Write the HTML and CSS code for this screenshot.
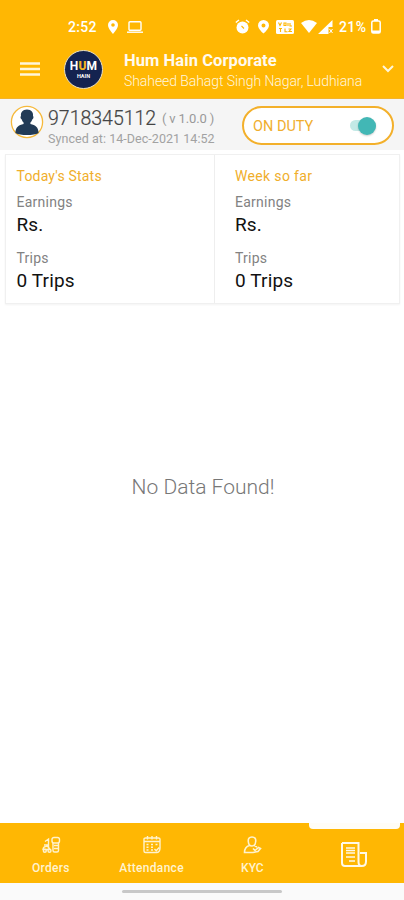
FILE: index.html
```
<!DOCTYPE html>
<html lang="en">
<head>
<meta charset="utf-8">
<title>Hum Hain Corporate</title>
<link rel="stylesheet" href="styles.css">
</head>
<body>
<header class="top">
  <div class="status">
    <span class="time">2:52</span>
    <svg class="s-pin" width="10" height="14" viewBox="0 0 10 14"><path fill="#fff" fill-rule="evenodd" d="M5 0a5 5 0 0 0-5 5c0 3.500 5 9 5 9s5-5.500 5-9a5 5 0 0 0-5-5zm0 3.200a1.800 1.800 0 1 1 0 3.600 1.800 1.800 0 0 1 0-3.600z"/></svg>
    <svg class="s-laptop" width="16" height="12" viewBox="0 0 16 12" fill="none" stroke="#fff" stroke-width="1.400"><rect x="2" y=".8" width="12" height="8.500" rx="1"/><path d="M0 11.200h16"/></svg>
    <span class="grow"></span>
    <svg class="s-alarm" width="15" height="15" viewBox="0 0 15 15"><circle cx="7.500" cy="8.500" r="6" fill="#fff"/><path d="M.8 3.500 4 1M14.200 3.500 11 1" stroke="#fff" stroke-width="1.500"/><path d="m6.500 7 2.500 2.500" fill="none" stroke="#ffb703" stroke-width="1.100"/></svg>
    <svg class="s-pin2" width="11" height="14" viewBox="0 0 11 14"><path fill="#fff" fill-rule="evenodd" d="M5.500 0A5.500 5.500 0 0 0 0 5.500C0 9 5.500 13.500 5.500 13.500S11 9 11 5.500A5.500 5.500 0 0 0 5.500 0zm0 3.500a2 2 0 1 1 0 4 2 2 0 0 1 0-4z"/></svg>
    <svg class="s-volte" width="18" height="14" viewBox="0 0 18 14"><rect width="18" height="14" rx="1.500" fill="#fff"/><path d="M2.500 2.500 4 5.500 5.500 2.500M8 3h2v2.500H8zM12 3v3M14 3v3h2M3 8.500h3M4.500 8.500V12M9 8.500v3.300h2.500M12.500 9H15l-2 2.500h3" fill="none" stroke="#ffb703" stroke-width="1.100"/></svg>
    <svg class="s-wifi" width="16" height="13" viewBox="0 0 16 13"><path fill="#fff" d="M0 3Q8-3 16 3L8 13z"/></svg>
    <svg class="s-signal" width="15" height="14" viewBox="0 0 15 14"><path fill="#fff" d="M0 14 14.500 0v7h-4v7z"/><path d="m11.500 9 3 4m0-4-3 4" stroke="#fff" stroke-width="1"/></svg>
    <span class="pct">21%</span>
    <svg class="s-batt" width="10" height="15" viewBox="0 0 10 15"><path fill="#fff" d="M3 0h4v2H3z"/><rect x=".8" y="2" width="8.400" height="12" rx="1.500" fill="none" stroke="#fff" stroke-width="1.500"/><path fill="#fff" d="M1 11.500h8V14H1z"/></svg>
  </div>
  <div class="appbar">
    <svg class="menu" width="20" height="14" viewBox="0 0 20 14"><path d="M0 1.400h20M0 7h20M0 12.600h20" stroke="#fff6dc" stroke-width="2.500"/></svg>
    <div class="logo"><span class="logo-main">H<b>U</b>M</span><span class="logo-sub">HAIN</span></div>
    <div class="titles">
      <div class="title">Hum Hain Corporate</div>
      <div class="subtitle">Shaheed Bahagt Singh Nagar, Ludhiana</div>
    </div>
    <svg class="chev" width="12" height="8" viewBox="0 0 12 8"><path d="m1 1 5 5 5-5" fill="none" stroke="#fff6dc" stroke-width="2"/></svg>
  </div>
</header>
<section class="user">
  <svg class="avatar" width="34" height="34" viewBox="0 0 34 34"><circle cx="17" cy="17" r="15.600" fill="#fff" stroke="#f6b93b" stroke-width="1.300"/><path fill="#223b57" d="M17 4.500c-4.500 0-6.500 3-6 6.500-1 .5-.4 3 .6 3.300.5 1.700 1.200 2.500 2 3.200v1.500c-5 1-8 3-8.200 9Q9.500 30 17 30t11.600-2c-.2-6-3.200-8-8.200-9v-1.500c.8-.7 1.500-1.500 2-3.200 1-.3 1.600-2.800.6-3.300.5-3.500-1.500-6.500-6-6.500z"/></svg>
  <div class="who">
    <div class="phone-row"><span class="phone">9718345112</span><span class="ver">( v 1.0.0 )</span></div>
    <div class="sync">Synced at: 14-Dec-2021 14:52</div>
  </div>
  <div class="duty"><span class="duty-text">ON DUTY</span><span class="track"><span class="knob"></span></span></div>
</section>
<section class="stats">
  <div class="card">
    <div class="head">Today's Stats</div>
    <div class="label">Earnings</div><div class="value">Rs.</div>
    <div class="label second">Trips</div><div class="value">0 Trips</div>
  </div>
  <div class="card week">
    <div class="head">Week so far</div>
    <div class="label">Earnings</div><div class="value">Rs.</div>
    <div class="label second">Trips</div><div class="value">0 Trips</div>
  </div>
</section>
<main class="empty"><span class="empty-text">No Data Found!</span></main>
<nav class="nav">
  <div class="tab">
    <svg width="20" height="18" viewBox="0 0 20 18" fill="none" stroke="#fff3cf" stroke-width="1.400"><path d="M4 5.500 7.500 3v9.500M3 9h4M2 14c0-3 2-4 5-3.500l2 3H2z"/><circle cx="3.800" cy="14.700" r="1.500"/><circle cx="8.500" cy="14.700" r="1.500"/><rect x="11" y="1.500" width="7.500" height="5.500" rx="2"/><path d="M12 7v7.500q0 1.500 1.500 1.500h2.500q1.500 0 1.500-1.500V7M13 9.500h4M13 12.500h4"/></svg>
    <span class="tab-text orders">Orders</span>
  </div>
  <div class="tab">
    <svg width="20" height="18" viewBox="0 0 20 18" fill="none" stroke="#fff3cf" stroke-width="1.400"><path d="M12 16.500H3.500q-1.500 0-1.500-1.500V3q0-1 1.500-1h13Q18 2 18 3v9M2 5.500h16M5.500 0v3.500M10 0v3.500M14.500 0v3.500M4.500 8.500h2M9 8.500h2M13.500 8.500h2M4.500 11.300h2M9 11.300h2M4.500 14h2M9 14h2"/><path d="M12 16.500h3q3-.5 3-4.500M12.500 13l1.700 1.700 3-3.200"/></svg>
    <span class="tab-text attendance">Attendance</span>
  </div>
  <div class="tab">
    <svg width="20" height="18" viewBox="0 0 20 18" fill="none" stroke="#fff3cf" stroke-width="1.600"><path d="M10 1C7 1 6 3 6.300 5.500 6.500 8.500 8 10 10 10s3.500-1.500 3.700-4.500C14 3 13 1 10 1zM7.500 9.500C4 10.500 2.500 12.500 2.500 16.500H11l5-1 2.500-3-2-1-3.500 3-2-2M12.500 9.500l2.500 1.500"/></svg>
    <span class="tab-text kyc">KYC</span>
  </div>
  <div class="tab active">
    <svg width="28" height="28" viewBox="0 0 28 28" fill="none" stroke="#fff9e8" stroke-width="2"><path d="M2 2h16.500v19q0 4 3.200 4 4.300 0 4.300-4.500V12h-6M2 2v20q0 3 3 3h16.500"/><path d="M6 7h9M6 9.500h9M6 12h9M6 16h9M9 20h6" stroke-width="1.500"/></svg>
  </div>
</nav>
<footer class="gesture"><span class="handle"></span></footer>
</body>
</html>
```

FILE: styles.css
```
* { box-sizing: border-box; }
body {
  margin: 0;
  width: 404px;
  height: 900px;
  display: flex;
  flex-direction: column;
  overflow: hidden;
  background: #fff;
  font-family: Roboto, "Liberation Sans", sans-serif;
  white-space: nowrap;
}
svg { display: block; flex: none; }
.top { height: 99px; background: #ffb703; border-bottom: 1px solid #f3b32b; }
.status { display: flex; align-items: center; height: 43px; padding: 10px 23px 0 68px; color: #fff; }
.time, .pct { font-size: 14px; font-weight: 500; line-height: 18px; }
.time { width: 30px; letter-spacing: .3px; }
.pct { width: 28px; margin-left: 6px; letter-spacing: .4px; }
.grow { flex: 1; }
.s-pin { margin-left: 10px; }
.s-laptop { margin-left: 9px; }
.s-pin2 { margin-left: 8px; }
.s-volte { margin-left: 7px; }
.s-wifi { margin-left: 7px; }
.s-signal { margin-left: 1px; }
.s-batt { margin-left: 4px; }
.appbar { display: flex; align-items: center; height: 52px; padding: 0 10px 0 20px; }
.logo {
  width: 39px; height: 39px; margin-left: 24px; border-radius: 50%;
  border: 1.5px solid #eadfbf; background: #142350; color: #fff;
  display: flex; flex-direction: column; align-items: center; justify-content: center;
}
.logo-main { font-size: 12px; line-height: 14px; font-weight: 700; letter-spacing: .2px; margin-top: 1px; }
.logo-main b { color: #f0b323; }
.logo-sub { font-size: 5.5px; line-height: 7px; font-weight: 700; }
.titles { margin-left: 21px; flex: 1; padding-top: 4px; }
.title { font-size: 16.5px; line-height: 20px; font-weight: 700; color: #fffaf0; letter-spacing: .08px; }
.subtitle { font-size: 14px; line-height: 21px; font-weight: 300; color: #fff6df; letter-spacing: -.07px; }
.user { display: flex; height: 51px; padding: 7px 10px 0 10px; background: #f5f5f5; }
.avatar { margin-top: -1px; }
.who { margin-left: 4px; width: 194px; }
.phone-row { display: flex; align-items: center; height: 24px; }
.phone { font-size: 19.5px; color: #444; width: 114px; font-weight: 300; letter-spacing: 0; -webkit-text-stroke: .2px #444; }
.ver { font-size: 13px; color: #999; letter-spacing: -.15px; }
.sync { font-size: 12.5px; line-height: 18px; color: #a2a2a2; letter-spacing: .05px; }
.duty {
  width: 152px; height: 39px; border: 2px solid #f3b02b; border-radius: 20px; background: #fff;
  display: flex; align-items: center; justify-content: space-between; padding: 0 16px 0 9px;
}
.duty-text { color: #f0ae2e; font-size: 14.5px; padding-top: 1px; }
.track { width: 26px; height: 11px; border-radius: 6px; background: #c3e9e6; display: flex; align-items: center; justify-content: flex-end; }
.knob { width: 18px; height: 18px; flex: none; border-radius: 50%; background: #42b7b5; box-shadow: 0 1px 2px #0003; }
.stats { display: flex; margin: 4px 4px 0 5px; height: 150px; border: 1px solid #f0f0f0; box-shadow: 0 1px 2px #0000000d; }
.card { width: 209px; padding: 11px 0 0 10.500px; border-right: 1px solid #eee; }
.week { flex: 1; padding-left: 20px; border-right: 0; }
.head { font-size: 14px; line-height: 20px; color: #f0ae2b; letter-spacing: .2px; }
.week .head { letter-spacing: .35px; }
.label { font-size: 14px; line-height: 20px; margin-top: 6px; color: #828282; letter-spacing: .25px; }
.value { font-size: 19px; line-height: 26px; color: #111; letter-spacing: .15px; }
.label.second { margin-top: 10px; }
.empty { flex: 1; text-align: center; padding-top: 169px; padding-left: 2px; }
.empty-text { font-size: 21px; line-height: 28px; font-weight: 300; color: #777; }
.nav { display: flex; height: 60px; background: #ffb703; }
.tab { flex: 1; display: flex; flex-direction: column; align-items: center; padding-top: 13px; padding-left: 1px; }
.tab-text { margin-top: 6px; font-size: 12px; line-height: 16px; font-weight: 500; color: #fff3cf; letter-spacing: .3px; }
.kyc { letter-spacing: 0; }
.active { padding-top: 0; padding-left: 2px; }
.active::before { content: ""; width: 91px; height: 6px; border-radius: 0 0 4px 4px; background: #fffdf7; }
.active svg { margin-top: 12px; }
.gesture { height: 17px; background: #fafafa; display: flex; justify-content: center; padding-top: 7px; }
.handle { width: 160px; height: 3px; border-radius: 2px; background: #c8c8c8; }
```
